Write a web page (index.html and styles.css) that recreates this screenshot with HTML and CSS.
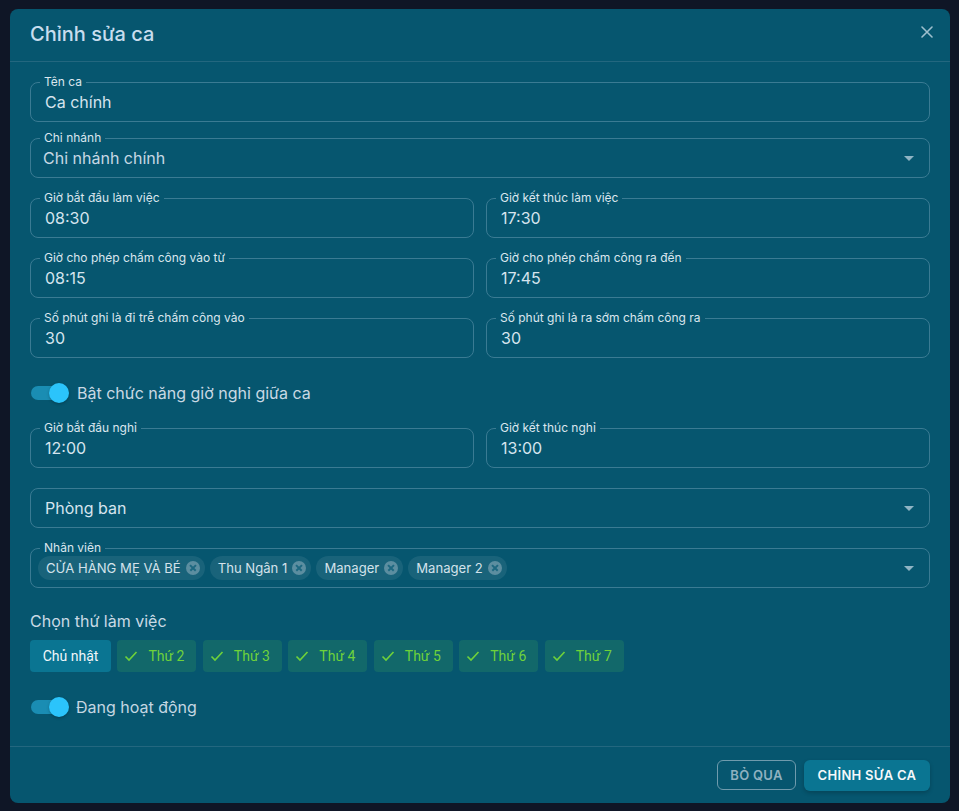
FILE: index.html
```html
<!DOCTYPE html>
<html lang="vi">
<head>
    <meta charset="UTF-8">
    <meta name="viewport" content="width=device-width, initial-scale=1.0">
    <link rel="stylesheet" href="styles.css">
</head>
<body>

<div class="dialog">
    <div class="dialog-header">
        <h2>Chỉnh sửa ca</h2>
        <button class="close-btn">
            <svg width="12" height="12" viewBox="0 0 12 12"><path d="M1 1 L11 11 M11 1 L1 11" stroke="currentColor" stroke-width="1.6" stroke-linecap="round"/></svg>
        </button>
    </div>

    <div class="dialog-body">
        <div class="field">
            <span class="field-label">Tên ca</span>
            <span class="field-value">Ca chính</span>
        </div>

        <div class="field select gap-small">
            <span class="field-label">Chi nhánh</span>
            <span class="field-value muted">Chi nhánh chính</span>
            <span class="arrow"></span>
        </div>

        <div class="row">
            <div class="field">
                <span class="field-label">Giờ bắt đầu làm việc</span>
                <span class="field-value">08:30</span>
            </div>
            <div class="field">
                <span class="field-label">Giờ kết thúc làm việc</span>
                <span class="field-value">17:30</span>
            </div>
        </div>

        <div class="row">
            <div class="field">
                <span class="field-label">Giờ cho phép chấm công vào từ</span>
                <span class="field-value">08:15</span>
            </div>
            <div class="field">
                <span class="field-label">Giờ cho phép chấm công ra đến</span>
                <span class="field-value">17:45</span>
            </div>
        </div>

        <div class="row">
            <div class="field">
                <span class="field-label">Số phút ghi là đi trễ chấm công vào</span>
                <span class="field-value">30</span>
            </div>
            <div class="field">
                <span class="field-label">Số phút ghi là ra sớm chấm công ra</span>
                <span class="field-value">30</span>
            </div>
        </div>

        <label class="switch-row">
            <span class="switch"><span class="thumb"></span></span>
            <span>Bật chức năng giờ nghỉ giữa ca</span>
        </label>

        <div class="row">
            <div class="field">
                <span class="field-label">Giờ bắt đầu nghỉ</span>
                <span class="field-value">12:00</span>
            </div>
            <div class="field">
                <span class="field-label">Giờ kết thúc nghỉ</span>
                <span class="field-value">13:00</span>
            </div>
        </div>

        <div class="field select">
            <span class="field-value">Phòng ban</span>
            <span class="arrow"></span>
        </div>

        <div class="field select chips-field">
            <span class="field-label">Nhân viên</span>
            <div class="chips">
                <span class="chip">CỬA HÀNG MẸ VÀ BÉ <i class="chip-x"></i></span>
                <span class="chip">Thu Ngân 1 <i class="chip-x"></i></span>
                <span class="chip">Manager <i class="chip-x"></i></span>
                <span class="chip">Manager 2 <i class="chip-x"></i></span>
            </div>
            <span class="arrow"></span>
        </div>

        <div class="section-title">Chọn thứ làm việc</div>
        <div class="days">
            <button class="day">Chủ nhật</button>
            <button class="day on"><svg width="14" height="14" viewBox="0 0 14 14"><path d="M1.5 7.5 L5 11 L12.5 3" fill="none" stroke="currentColor" stroke-width="1.6"/></svg>Thứ 2</button>
            <button class="day on"><svg width="14" height="14" viewBox="0 0 14 14"><path d="M1.5 7.5 L5 11 L12.5 3" fill="none" stroke="currentColor" stroke-width="1.6"/></svg>Thứ 3</button>
            <button class="day on"><svg width="14" height="14" viewBox="0 0 14 14"><path d="M1.5 7.5 L5 11 L12.5 3" fill="none" stroke="currentColor" stroke-width="1.6"/></svg>Thứ 4</button>
            <button class="day on"><svg width="14" height="14" viewBox="0 0 14 14"><path d="M1.5 7.5 L5 11 L12.5 3" fill="none" stroke="currentColor" stroke-width="1.6"/></svg>Thứ 5</button>
            <button class="day on"><svg width="14" height="14" viewBox="0 0 14 14"><path d="M1.5 7.5 L5 11 L12.5 3" fill="none" stroke="currentColor" stroke-width="1.6"/></svg>Thứ 6</button>
            <button class="day on"><svg width="14" height="14" viewBox="0 0 14 14"><path d="M1.5 7.5 L5 11 L12.5 3" fill="none" stroke="currentColor" stroke-width="1.6"/></svg>Thứ 7</button>
        </div>

        <label class="switch-row active-row">
            <span class="switch"><span class="thumb"></span></span>
            <span>Đang hoạt động</span>
        </label>
    </div>

    <div class="dialog-footer">
        <button class="btn-outline">BỎ QUA</button>
        <button class="btn-primary">CHỈNH SỬA CA</button>
    </div>
</div>

</body>
</html>
```

FILE: styles.css
```css
body {
    margin: 0;
    padding: 9px 9px 0 10px;
    background-color: #0f1626;
    font-family: Inter, "Noto Sans", sans-serif;
    color: #d3e2ec;
    height: 811px;
    box-sizing: border-box;
    overflow: hidden;
}

.dialog {
    width: 940px;
    height: 794px;
    background-color: #06566f;
    border-radius: 8px;
    display: flex;
    flex-direction: column;
}

.dialog-header {
    height: 52px;
    border-bottom: 1px solid #23677f;
    display: flex;
    align-items: center;
    justify-content: space-between;
    padding: 0 16px 0 20px;
}

.dialog-header h2 {
    margin: 0;
    font-size: 20px;
    font-weight: 500;
    color: #c8ddee;
    position: relative;
    top: -1px;
}

.close-btn {
    background: none;
    border: none;
    color: #9ebfcd;
    padding: 0;
    width: 12px;
    height: 12px;
    display: flex;
    position: relative;
    top: -3px;
    margin-right: 1px;
}

.dialog-body {
    flex: 1;
    padding: 20px 20px 0 20px;
    display: flex;
    flex-direction: column;
}

.field {
    position: relative;
    height: 40px;
    border: 1px solid #3a7b93;
    border-radius: 8px;
    box-sizing: border-box;
    display: flex;
    align-items: center;
    padding: 0 14px;
    margin-bottom: 20px;
}

.gap-small {
    margin-top: -4px;
}

.field-label {
    position: absolute;
    top: -8px;
    left: 9px;
    padding: 0 4px;
    font-size: 12px;
    line-height: 14px;
    color: #dbe6ee;
    background-color: #06566f;
}

.field-value {
    font-size: 16px;
    color: #d5e4ee;
}

.field-value.muted {
    color: #c6d8e4;
    margin-left: -2px;
}

.row {
    display: flex;
    gap: 12px;
}

.row .field {
    flex: 1;
}

.arrow {
    position: absolute;
    right: 15px;
    top: 17px;
    width: 0;
    height: 0;
    border-left: 5px solid transparent;
    border-right: 5px solid transparent;
    border-top: 5px solid #8fb4c4;
}

.chips-field {
    padding-left: 7px;
    margin-bottom: 23px;
}

.chips {
    display: flex;
    gap: 5px;
}

.chip {
    height: 24px;
    border-radius: 12px;
    background-color: rgba(255, 255, 255, 0.08);
    display: flex;
    align-items: center;
    gap: 5px;
    padding: 0 5px 0 8px;
    font-size: 13.1px;
    color: #d4e2eb;
    white-space: nowrap;
}

.chip-x {
    width: 14px;
    height: 14px;
    border-radius: 50%;
    background-color: #5c8ea0;
    position: relative;
}

.chip-x::before,
.chip-x::after {
    content: "";
    position: absolute;
    left: 3px;
    top: 6px;
    width: 8px;
    height: 1.6px;
    background-color: #1d6880;
    transform: rotate(45deg);
}

.chip-x::after {
    transform: rotate(-45deg);
}

.switch-row {
    display: flex;
    align-items: center;
    gap: 11px;
    height: 30px;
    font-size: 16px;
    color: #c9d9e4;
    margin-bottom: 20px;
}

.switch {
    position: relative;
    width: 35px;
    height: 14px;
    border-radius: 7px;
    background-color: #1a8db3;
    margin-left: 1px;
}

.thumb {
    position: absolute;
    right: -3px;
    top: -3px;
    width: 20px;
    height: 20px;
    border-radius: 50%;
    background-color: #2bc4fb;
    box-shadow: 0 1px 3px rgba(0, 0, 0, 0.25);
}

.active-row {
    gap: 10px;
    margin-bottom: 24px;
    color: #c4d6e2;
}

.section-title {
    font-size: 16px;
    line-height: 20px;
    color: #c9dae5;
    margin-bottom: 9px;
}

.days {
    display: flex;
    gap: 6.4px;
    margin-bottom: 20px;
}

.day {
    height: 32px;
    border: none;
    border-radius: 4px;
    font-family: Roboto, sans-serif;
    font-size: 14px;
    padding: 0 12px;
    min-width: 81px;
    justify-content: center;
    background-color: #0a7592;
    color: #f2f7fa;
    display: flex;
    align-items: center;
    white-space: nowrap;
    flex-shrink: 0;
}

.day.on {
    background-color: #12686a;
    color: #6fd23a;
    padding: 0 12px 0 7px;
    gap: 10px;
    min-width: 79px;
    justify-content: flex-start;
}

.dialog-footer {
    height: 56px;
    border-top: 1px solid #23677f;
    display: flex;
    justify-content: flex-end;
    align-items: center;
    gap: 8px;
    padding: 0 20px;
}

.btn-outline {
    height: 30px;
    width: 79px;
    border: 1px solid #6f9bad;
    border-radius: 6px;
    background: transparent;
    color: #8fb1c0;
    font-family: Inter, sans-serif;
    font-size: 13px;
    font-weight: 600;
    letter-spacing: 0.3px;
}

.btn-primary {
    height: 31px;
    width: 126px;
    border: none;
    border-radius: 6px;
    background-color: #0a7592;
    color: #f4f8fa;
    font-family: Inter, sans-serif;
    font-size: 13px;
    font-weight: 600;
    letter-spacing: 0.3px;
    box-shadow: 0 2px 4px rgba(0, 0, 0, 0.2);
}
```
